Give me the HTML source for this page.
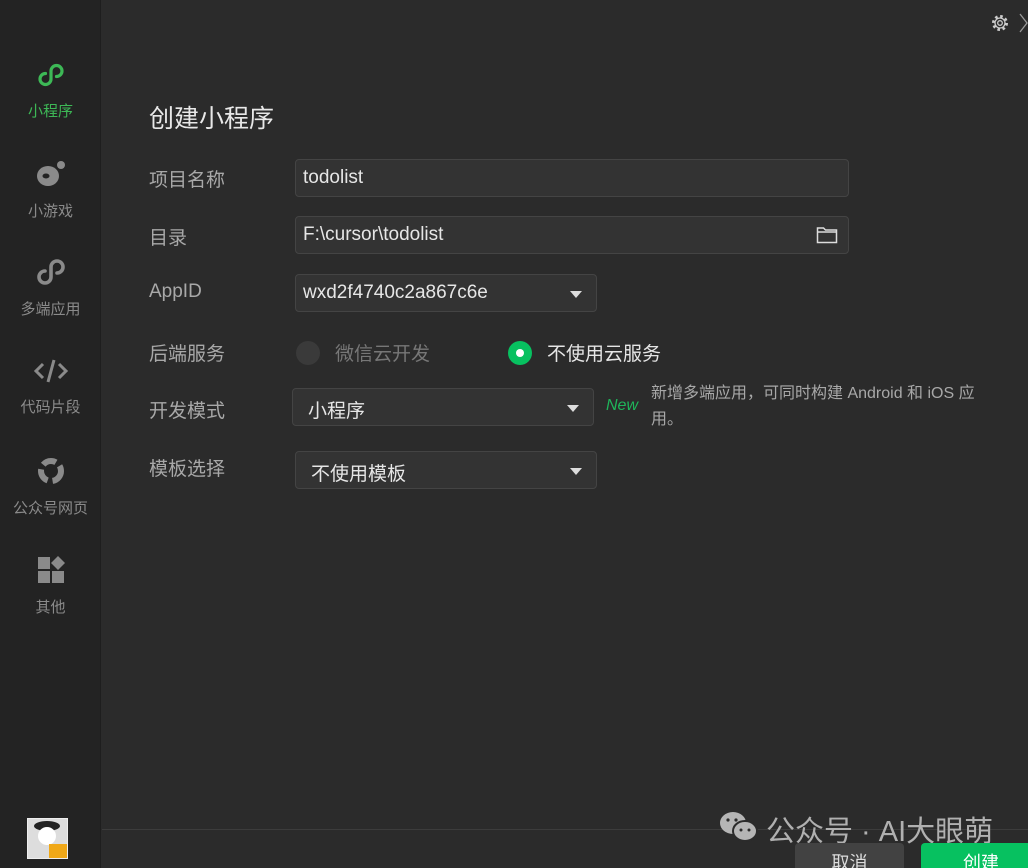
<!DOCTYPE html>
<html><head><meta charset="utf-8"><style>
*{margin:0;padding:0;box-sizing:border-box}
html,body{width:1028px;height:868px;overflow:hidden}
body{background:#2b2b2b;font-family:"Liberation Sans","Noto Sans CJK SC",sans-serif;position:relative;color:#ddd}
.side{position:absolute;left:0;top:0;width:101px;height:868px;background:#232323;border-right:1px solid #1e1e1e}
.it{position:absolute;left:0;width:101px;text-align:center;font-size:15px;color:#8a8a8a}
.it svg{display:block;margin:0 auto 10px}
.lbl{position:absolute;left:149px;font-size:19px;color:#a8a8a8}
.inp{position:absolute;left:295px;height:38px;background:#333;border:1px solid #444;border-radius:4px;font-size:19px;color:#e6e6e6;padding:7px 0 0 7px}
.tri{position:absolute;right:14px;top:16px;width:0;height:0;border-left:6px solid transparent;border-right:6px solid transparent;border-top:7px solid #ddd}
.btn{position:absolute;top:843px;height:25px;border-radius:4px 4px 0 0;font-size:18px;text-align:center;padding-top:8px;overflow:hidden;line-height:24px}
</style></head><body>
<div class="side">
 <div class="it" style="top:60px;color:#3db856"><svg width="30" height="30" viewBox="0 0 30 30"><path d="M15 12v7a5.5 5.5 0 1 1-5.5-5.5M15 18v-7a5.5 5.5 0 1 1 5.5 5.5" fill="none" stroke="#3db856" stroke-width="3.2" stroke-linecap="round"/></svg>小程序</div>
 <div class="it" style="top:158px"><svg width="34" height="32" viewBox="0 0 34 32"><ellipse cx="14" cy="18" rx="11" ry="10" fill="#8a8a8a"/><ellipse cx="12" cy="18" rx="3.5" ry="2.5" fill="#232323"/><circle cx="27" cy="7" r="4" fill="#8a8a8a"/></svg>小游戏</div>
 <div class="it" style="top:256px"><svg width="34" height="32" viewBox="0 0 34 32"><path d="M17 13v8a6 6 0 1 1-6-6M17 19v-8a6 6 0 1 1 6 6" fill="none" stroke="#8a8a8a" stroke-width="3.6" stroke-linecap="round"/></svg>多端应用</div>
 <div class="it" style="top:356px"><svg width="36" height="30" viewBox="0 0 36 30"><path d="M10 8l-7 7 7 7M26 8l7 7-7 7M21 4l-6 22" fill="none" stroke="#8a8a8a" stroke-width="3"/></svg>代码片段</div>
 <div class="it" style="top:455px"><svg width="34" height="32" viewBox="0 0 34 32"><circle cx="17" cy="16" r="10" fill="none" stroke="#8a8a8a" stroke-width="6" stroke-dasharray="14 5"/></svg>公众号网页</div>
 <div class="it" style="top:554px"><svg width="32" height="32" viewBox="0 0 32 32"><rect x="3" y="3" width="12" height="12" fill="#8a8a8a"/><rect x="3" y="17" width="12" height="12" fill="#8a8a8a"/><rect x="17" y="17" width="12" height="12" fill="#8a8a8a"/><path d="M23 2l7 7-7 7-7-7z" fill="#8a8a8a"/></svg>其他</div>
 <div style="position:absolute;left:27px;top:818px;width:41px;height:41px;background:#ddd;border:1px solid #eee;overflow:hidden"><div style="position:absolute;left:6px;top:2px;width:26px;height:10px;background:#222;border-radius:50%"></div><div style="position:absolute;left:10px;top:8px;width:18px;height:18px;background:#fff;border-radius:50%"></div><div style="position:absolute;right:0;bottom:0;width:18px;height:14px;background:#f0a818"></div></div>
</div>
<svg style="position:absolute;left:989px;top:12px" width="22" height="22" viewBox="0 0 22 22"><circle cx="11" cy="11" r="6.5" fill="none" stroke="#ccc" stroke-width="3" stroke-dasharray="2.5 2.6"/><circle cx="11" cy="11" r="5" fill="none" stroke="#ccc" stroke-width="1.3"/><circle cx="11" cy="11" r="2.3" fill="none" stroke="#ccc" stroke-width="1.3"/></svg>
<svg style="position:absolute;left:1018px;top:12px" width="10" height="22"><path d="M2 2l7 9-7 9" fill="none" stroke="#999" stroke-width="1.3"/></svg>
<div style="position:absolute;left:149px;top:99px;font-size:25px;color:#e8e8e8">创建小程序</div>
<div class="lbl" style="top:165px">项目名称</div>
<div class="inp" style="top:159px;width:554px">todolist</div>
<div class="lbl" style="top:223px">目录</div>
<div class="inp" style="top:216px;width:554px">F:\cursor\todolist<svg style="position:absolute;right:10px;top:9px" width="22" height="18" viewBox="0 0 22 18"><path d="M1.5 2h6l2 2h11v12.5h-19z M1.5 6h19" fill="none" stroke="#ddd" stroke-width="1.5"/></svg></div>
<div class="lbl" style="top:281px">AppID</div>
<div class="inp" style="top:274px;width:302px">wxd2f4740c2a867c6e<div class="tri"></div></div>
<div class="lbl" style="top:339px">后端服务</div>
<div style="position:absolute;left:296px;top:341px;width:24px;height:24px;border-radius:50%;background:#3a3a3a"></div>
<div style="position:absolute;left:335px;top:339px;font-size:19px;color:#777">微信云开发</div>
<div style="position:absolute;left:508px;top:341px;width:24px;height:24px;border-radius:50%;background:#07c160"><div style="position:absolute;left:8px;top:8px;width:8px;height:8px;border-radius:50%;background:#fff"></div></div>
<div style="position:absolute;left:547px;top:339px;font-size:19px;color:#e6e6e6">不使用云服务</div>
<div class="lbl" style="top:396px">开发模式</div>
<div class="inp" style="top:388px;left:292px;width:302px;padding-left:15px">小程序<div class="tri"></div></div>
<div style="position:absolute;left:606px;top:397px;font-size:16px;font-style:italic;color:#1fb55a">New</div>
<div style="position:absolute;left:651px;top:381px;width:350px;font-size:16px;line-height:26px;color:#a8a8a8">新增多端应用，可同时构建 Android 和 iOS 应用。</div>
<div class="lbl" style="top:454px">模板选择</div>
<div class="inp" style="top:451px;width:302px;padding-left:15px">不使用模板<div class="tri"></div></div>
<div style="position:absolute;left:102px;top:829px;width:926px;height:1px;background:#3c3c3c"></div>
<svg style="position:absolute;left:718px;top:810px" width="42" height="34" viewBox="0 0 42 34"><ellipse cx="15" cy="13" rx="13" ry="11" fill="#b5b5b5"/><ellipse cx="27" cy="21" rx="12" ry="10" fill="#b5b5b5" stroke="#2b2b2b" stroke-width="2"/><circle cx="10" cy="10" r="1.6" fill="#2b2b2b"/><circle cx="18" cy="10" r="1.6" fill="#2b2b2b"/><circle cx="23" cy="20" r="1.5" fill="#2b2b2b"/><circle cx="31" cy="20" r="1.5" fill="#2b2b2b"/></svg>
<div style="position:absolute;left:766px;top:808px;font-size:29px;color:#b0b0b0;white-space:nowrap">公众号 · AI大眼萌</div>
<div class="btn" style="left:795px;width:109px;background:#424242;color:#ddd">取消</div>
<div class="btn" style="left:921px;width:120px;background:#07c160;color:#fff">创建</div>
</body></html>
